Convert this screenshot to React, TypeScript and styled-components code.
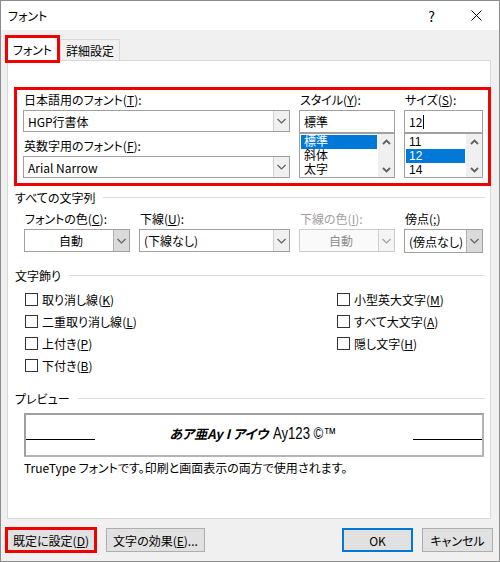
import React from 'react';
import styled, { createGlobalStyle } from 'styled-components';

const GlobalStyle = createGlobalStyle`
  html, body {
    margin: 0;
    padding: 0;
    background: #ffffff;
  }
  body {
    font-family: 'Noto Sans CJK JP', 'Noto Sans', sans-serif;
    font-size: 12px;
    color: #000;
    font-feature-settings: 'palt';
  }
`;

const RED = '#f00000';

const Window = styled.div`
  width: 500px;
  height: 562px;
  box-sizing: border-box;
  border: 1px solid #8c8c8c;
  background: #f0f0f0;
  display: flex;
  flex-direction: column;
`;

const TitleBar = styled.div`
  height: 29px;
  background: #ffffff;
  display: flex;
  align-items: center;
  padding-left: 7px;
`;

const TitleText = styled.div`
  flex: 1;
`;

const CaptionButton = styled.div`
  width: 45px;
  height: 29px;
  display: flex;
  align-items: center;
  justify-content: center;
  font-size: 14px;
  color: #000;
`;

const TabStrip = styled.div`
  height: 30px;
  display: flex;
  align-items: flex-end;
  padding-left: 4px;
`;

const Tab = styled.div<{ $active?: boolean }>`
  box-sizing: border-box;
  display: flex;
  align-items: center;
  justify-content: center;
  position: relative;
  ${(p) =>
    p.$active
      ? `
    width: 55px;
    height: 28px;
    margin-bottom: -3px;
    border: 3px solid ${RED};
    background: #ffffff;
    z-index: 1;
    padding-top: 1px;
  `
      : `
    width: 60px;
    height: 21px;
    border: 1px solid #d9d9d9;
    border-bottom: none;
    background: #f0f0f0;
  `}
`;

const Panel = styled.div`
  box-sizing: border-box;
  width: 484px;
  height: 459px;
  margin-left: 6px;
  background: #ffffff;
  border: 1px solid #d9d9d9;
  padding-top: 26px;
  display: flex;
  flex-direction: column;
`;

const FontGroup = styled.div`
  box-sizing: border-box;
  width: 477px;
  margin-left: 6px;
  border: 3px solid ${RED};
  padding: 1px 3px 5px 6px;
  display: grid;
  grid-template-columns: 267px 96px 79px;
  column-gap: 9px;
`;

const Column = styled.div`
  display: flex;
  flex-direction: column;
`;

const Label = styled.div<{ $disabled?: boolean; $gap?: number }>`
  height: 19px;
  line-height: 18px;
  padding-left: 1px;
  margin-top: ${(p) => p.$gap ?? 0}px;
  white-space: nowrap;
  color: ${(p) => (p.$disabled ? '#a0a0a0' : '#000')};
`;

const Combo = styled.div<{ $disabled?: boolean; $height?: number }>`
  box-sizing: border-box;
  height: ${(p) => p.$height ?? 22}px;
  display: flex;
  border: 1px solid ${(p) => (p.$disabled ? '#cccccc' : '#a0a0a0')};
  background: ${(p) => (p.$disabled ? '#fafafa' : '#ffffff')};
`;

const ComboValue = styled.div<{ $centered?: boolean; $disabled?: boolean }>`
  flex: 1;
  display: flex;
  align-items: center;
  padding-left: 4px;
  justify-content: ${(p) => (p.$centered ? 'center' : 'flex-start')};
  color: ${(p) => (p.$disabled ? '#8c8c8c' : '#000')};
  white-space: nowrap;
  overflow: hidden;
`;

const DropButton = styled.div<{ $shaded?: boolean; $disabled?: boolean }>`
  box-sizing: border-box;
  width: 16px;
  display: flex;
  align-items: center;
  justify-content: center;
  background: ${(p) => (p.$shaded ? '#dadada' : p.$disabled ? '#f4f4f4' : '#f0f0f0')};
  border-left: 1px solid ${(p) => (p.$shaded ? '#b0b0b0' : '#d0d0d0')};
`;

const TextBox = styled.div`
  box-sizing: border-box;
  height: 23px;
  border: 1px solid #a0a0a0;
  display: flex;
  align-items: center;
  padding-left: 4px;
`;

const Caret = styled.span`
  display: inline-block;
  width: 1px;
  height: 14px;
  background: #000;
  margin-left: 1px;
`;

const ListBox = styled.div`
  box-sizing: border-box;
  height: 45px;
  border: 1px solid #a0a0a0;
  display: flex;
`;

const ListItems = styled.div`
  flex: 1;
  padding: 1px 1px 0 1px;
  display: flex;
  flex-direction: column;
`;

const ListItem = styled.div<{ $selected?: boolean }>`
  height: 14px;
  line-height: 14px;
  font-family: 'Liberation Sans', 'Noto Sans CJK JP', sans-serif;
  font-size: 12px;
  padding-left: 3px;
  background: ${(p) => (p.$selected ? '#0078d7' : 'transparent')};
  color: ${(p) => (p.$selected ? '#ffffff' : '#000')};
`;

const ScrollBar = styled.div`
  width: 16px;
  background: #f0f0f0;
  display: flex;
  flex-direction: column;
  justify-content: space-between;
  align-items: center;
  padding: 5px 0 4px;
`;

const Section = styled.div`
  padding: 0 5px 0 7px;
`;

const SectionHeader = styled.div<{ $gap: number }>`
  display: flex;
  align-items: center;
  height: 16px;
  margin-top: ${(p) => p.$gap}px;
  white-space: nowrap;
  &::after {
    content: '';
    flex: 1;
    height: 1px;
    background: #dcdcdc;
    margin-left: 8px;
  }
`;

const FieldRow = styled.div`
  display: grid;
  grid-template-columns: 106px 151px 96px 79px;
  column-gap: 9px;
  padding-left: 16px;
  margin-top: 5px;
`;

const CheckGrid = styled.div`
  display: grid;
  grid-template-columns: 312px 1fr;
  grid-auto-rows: 22px;
  padding-left: 17px;
  margin-top: 5px;
`;

const CheckRow = styled.div`
  display: flex;
  align-items: center;
  gap: 4px;
  white-space: nowrap;
`;

const CheckBox = styled.span`
  box-sizing: border-box;
  width: 13px;
  height: 13px;
  border: 1px solid #333333;
  background: #ffffff;
`;

const PreviewBox = styled.div`
  box-sizing: border-box;
  width: 460px;
  height: 44px;
  margin: 7px 0 0 16px;
  border: 2px solid #a0a0a0;
  border-right-color: #b4b4b4;
  border-bottom-color: #b4b4b4;
  display: flex;
`;

const PreviewLine = styled.div`
  width: 69px;
  height: 1px;
  background: #000;
  align-self: flex-end;
  margin-bottom: 15px;
`;

const PreviewText = styled.div`
  flex: 1;
  display: flex;
  align-items: center;
  justify-content: center;
  padding-bottom: 3px;
  white-space: nowrap;
`;

const BrushText = styled.span`
  font-family: 'Noto Sans CJK JP', sans-serif;
  font-weight: 700;
  font-style: italic;
  font-size: 13px;
`;

const NarrowText = styled.span`
  display: inline-block;
  font-family: 'Liberation Sans Narrow', 'Liberation Sans', sans-serif;
  font-size: 16px;
  margin-left: 5px;
  margin-right: -12px;
  transform: scaleX(0.82);
  transform-origin: left center;
`;

const Info = styled.div`
  margin: 3px 0 0 16px;
  height: 16px;
  line-height: 16px;
  white-space: nowrap;
`;

const Footer = styled.div`
  flex: 1;
  display: flex;
  align-items: center;
  padding: 0 6px 0 4px;
  gap: 9px;
`;

const Spacer = styled.div`
  flex: 1;
`;

const Button = styled.div<{ $width: number; $variant?: 'default' | 'marked' }>`
  box-sizing: border-box;
  width: ${(p) => p.$width}px;
  height: ${(p) => (p.$variant === 'marked' ? 26 : 24)}px;
  display: flex;
  align-items: center;
  justify-content: center;
  background: #e1e1e1;
  white-space: nowrap;
  border: ${(p) =>
    p.$variant === 'marked'
      ? `3px solid ${RED}`
      : p.$variant === 'default'
        ? '2px solid #0078d7'
        : '1px solid #adadad'};
`;

const Chevron = ({ color = '#606060' }: { color?: string }) => (
  <svg width="9" height="6" viewBox="0 0 9 6">
    <path d="M0.5 1 L4.5 5 L8.5 1" fill="none" stroke={color} strokeWidth="1.2" />
  </svg>
);

const ScrollArrow = ({ dir }: { dir: 'up' | 'down' }) => (
  <svg width="9" height="6" viewBox="0 0 9 6">
    <path
      d={dir === 'down' ? 'M1 1 L4.5 4.5 L8 1' : 'M1 5 L4.5 1.5 L8 5'}
      fill="none"
      stroke="#606060"
      strokeWidth="1.8"
    />
  </svg>
);

const CloseIcon = () => (
  <svg width="11" height="11" viewBox="0 0 11 11">
    <path d="M0.5 0.5 L10.5 10.5 M10.5 0.5 L0.5 10.5" stroke="#000" strokeWidth="1" />
  </svg>
);

const ComboBox = ({
  value,
  centered,
  disabled,
  shaded,
  height
}: {
  value: string;
  centered?: boolean;
  disabled?: boolean;
  shaded?: boolean;
  height?: number;
}) => (
  <Combo $disabled={disabled} $height={height}>
    <ComboValue $centered={centered} $disabled={disabled}>
      {value}
    </ComboValue>
    <DropButton $shaded={shaded} $disabled={disabled}>
      <Chevron color={disabled ? '#a0a0a0' : '#606060'} />
    </DropButton>
  </Combo>
);

const List = ({ items, selected }: { items: string[]; selected: string }) => (
  <ListBox>
    <ListItems>
      {items.map((it) => (
        <ListItem key={it} $selected={it === selected}>
          {it}
        </ListItem>
      ))}
    </ListItems>
    <ScrollBar>
      <ScrollArrow dir="up" />
      <ScrollArrow dir="down" />
    </ScrollBar>
  </ListBox>
);

const Check = ({ label, accel }: { label: string; accel: string }) => (
  <CheckRow>
    <CheckBox />
    <span>
      {label}(<u>{accel}</u>)
    </span>
  </CheckRow>
);

const App = () => {
  return (
    <>
      <GlobalStyle />
      <Window>
        <TitleBar>
          <TitleText>フォント</TitleText>
          <CaptionButton>?</CaptionButton>
          <CaptionButton>
            <CloseIcon />
          </CaptionButton>
        </TitleBar>

        <TabStrip>
          <Tab $active>フォント</Tab>
          <Tab>詳細設定</Tab>
        </TabStrip>

        <Panel>
          <FontGroup>
            <Column>
              <Label>
                日本語用のフォント(<u>T</u>):
              </Label>
              <ComboBox value="HGP行書体" />
              <Label $gap={5}>
                英数字用のフォント(<u>F</u>):
              </Label>
              <ComboBox value="Arial Narrow" />
            </Column>
            <Column>
              <Label>
                スタイル(<u>Y</u>):
              </Label>
              <TextBox>標準</TextBox>
              <List items={['標準', '斜体', '太字']} selected="標準" />
            </Column>
            <Column>
              <Label>
                サイズ(<u>S</u>):
              </Label>
              <TextBox>
                12
                <Caret />
              </TextBox>
              <List items={['11', '12', '14']} selected="12" />
            </Column>
          </FontGroup>

          <Section>
            <SectionHeader $gap={3}>すべての文字列</SectionHeader>
          </Section>
          <FieldRow>
            <Column>
              <Label>
                フォントの色(<u>C</u>):
              </Label>
              <ComboBox value="自動" centered shaded height={23} />
            </Column>
            <Column>
              <Label>
                下線(<u>U</u>):
              </Label>
              <ComboBox value="(下線なし)" height={23} />
            </Column>
            <Column>
              <Label $disabled>
                下線の色(<u>I</u>):
              </Label>
              <ComboBox value="自動" centered disabled height={23} />
            </Column>
            <Column>
              <Label>
                傍点(<u>;</u>)
              </Label>
              <ComboBox value="(傍点なし)" shaded height={24} />
            </Column>
          </FieldRow>

          <Section>
            <SectionHeader $gap={14}>文字飾り</SectionHeader>
          </Section>
          <CheckGrid>
            <Check label="取り消し線" accel="K" />
            <Check label="小型英大文字" accel="M" />
            <Check label="二重取り消し線" accel="L" />
            <Check label="すべて大文字" accel="A" />
            <Check label="上付き" accel="P" />
            <Check label="隠し文字" accel="H" />
            <Check label="下付き" accel="B" />
          </CheckGrid>

          <Section>
            <SectionHeader $gap={14}>プレビュー</SectionHeader>
          </Section>
          <PreviewBox>
            <PreviewLine />
            <PreviewText>
              <BrushText>あア亜Ay I アイウ</BrushText>
              <NarrowText>Ay123 ©™</NarrowText>
            </PreviewText>
            <PreviewLine />
          </PreviewBox>
          <Info>TrueType フォントです。印刷と画面表示の両方で使用されます。</Info>
        </Panel>

        <Footer>
          <Button $width={92} $variant="marked">
            既定に設定(<u>D</u>)
          </Button>
          <Button $width={99}>
            文字の効果(<u>E</u>)...
          </Button>
          <Spacer />
          <Button $width={71} $variant="default">
            OK
          </Button>
          <Button $width={71}>キャンセル</Button>
        </Footer>
      </Window>
    </>
  );
};

export default App;
